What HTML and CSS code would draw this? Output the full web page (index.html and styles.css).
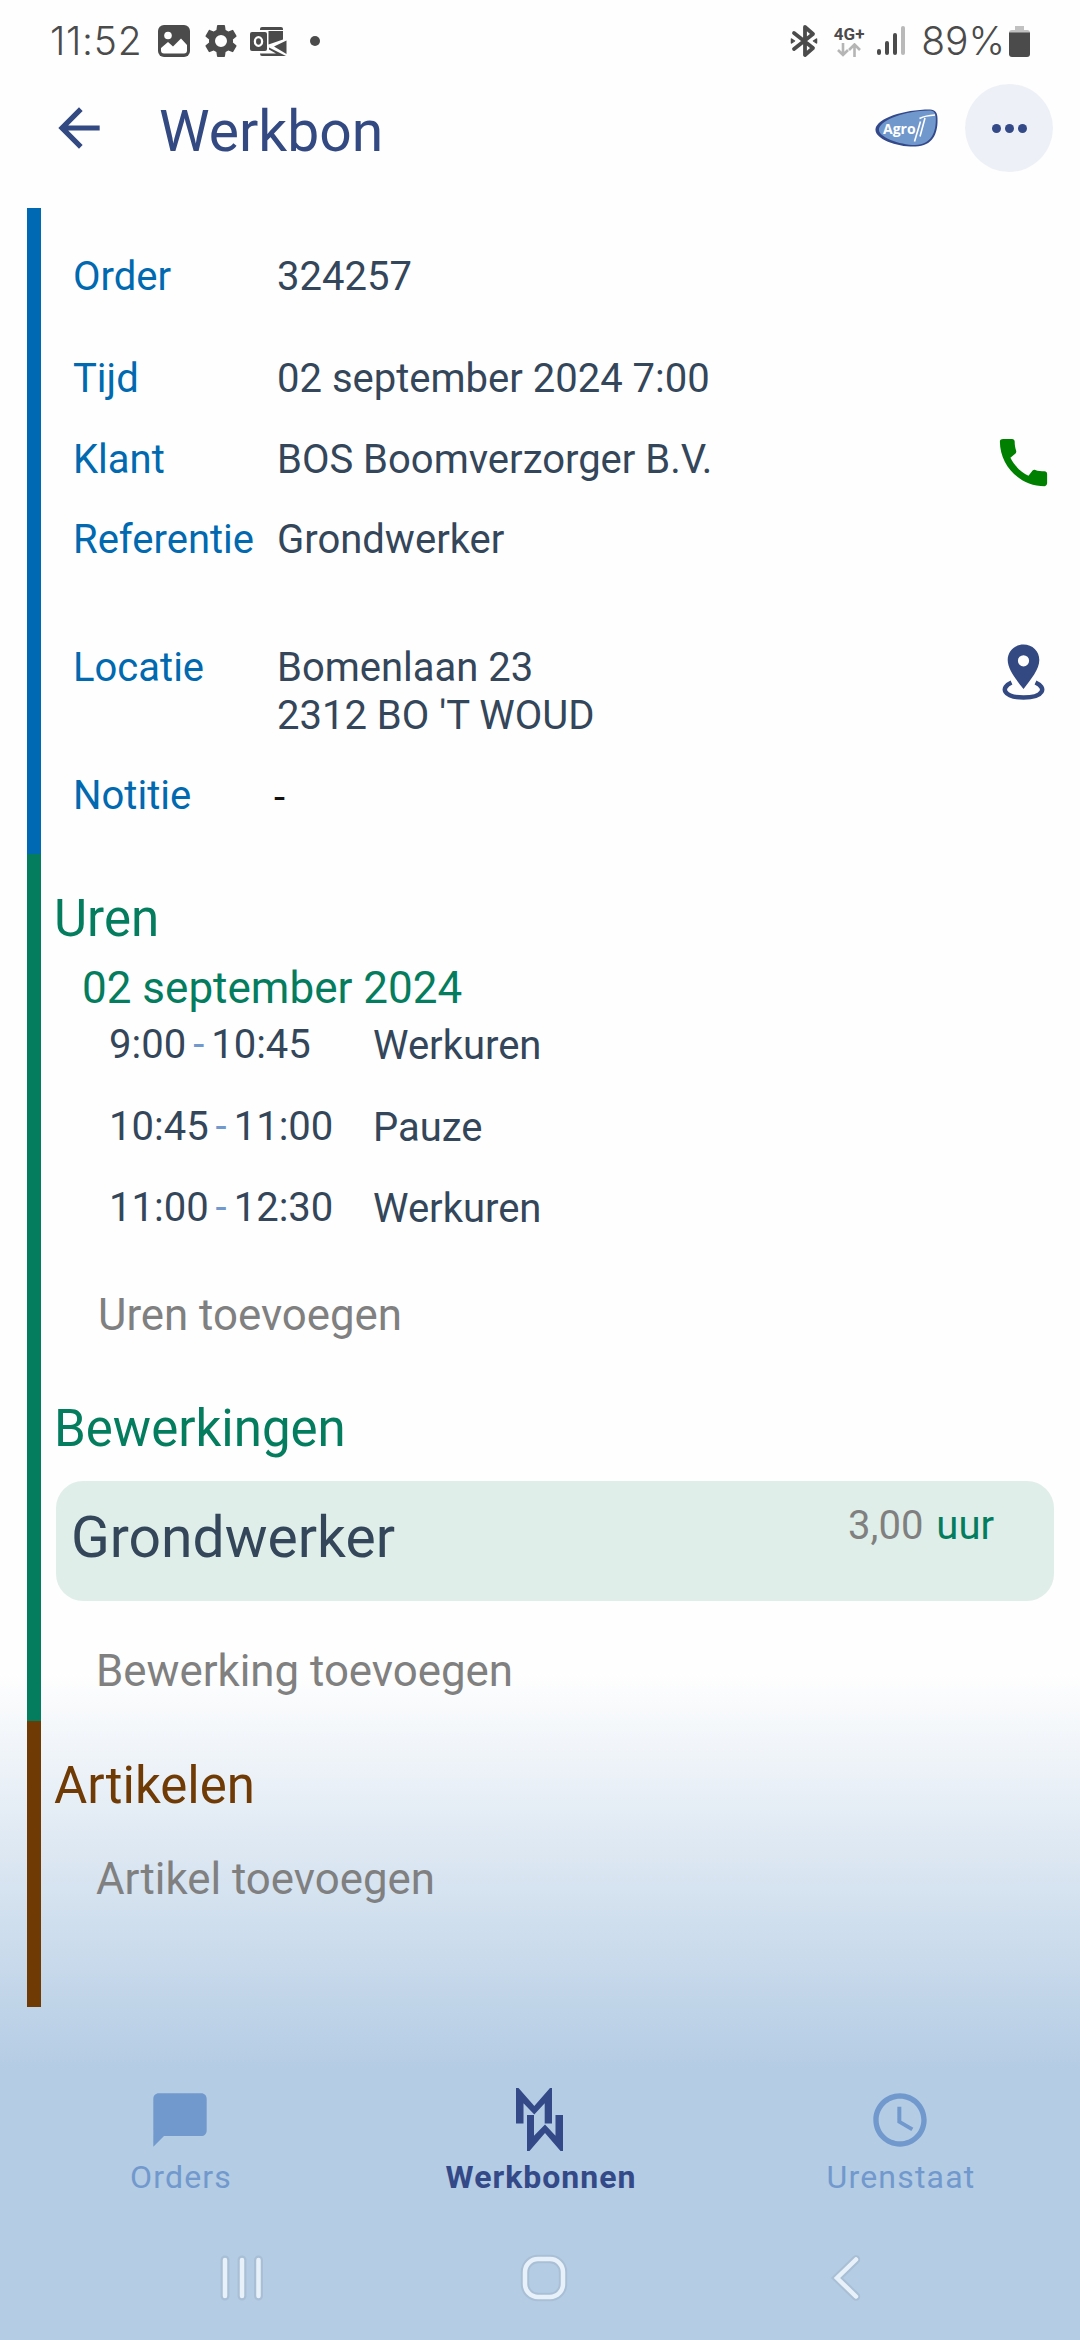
FILE: index.html
```html
<!DOCTYPE html>
<html lang="nl">
<head>
    <meta charset="UTF-8">
    <meta name="viewport" content="width=device-width, initial-scale=1.0">
    <title>Werkbon</title>
    <link rel="stylesheet" href="styles.css">
</head>
<body>

    <div class="status-bar">
        <div class="status-left">
            <span class="clock">11:52</span>
            <svg class="icon-photo" width="32" height="32" viewBox="0 0 32 32">
                <rect width="32" height="32" rx="6" fill="#4b4b4b"/>
                <circle cx="10" cy="10.500" r="3.800" fill="#fff"/>
                <path d="M3 23l7-6 5 4.500 8-8 6 6.500v5.500q0 3-3 3H6q-3 0-3-3z" fill="#fff"/>
            </svg>
            <svg class="icon-gear" width="40" height="40" viewBox="0 0 24 24">
                <path fill="#4b4b4b" d="M19.140 12.940c.04-.3.060-.61.060-.94 0-.32-.02-.64-.07-.94l2.030-1.580a.49.49 0 0 0 .12-.61l-1.920-3.320a.488.488 0 0 0-.59-.22l-2.390.96c-.5-.38-1.030-.7-1.620-.94l-.36-2.540a.484.484 0 0 0-.48-.41h-3.840c-.24 0-.43.17-.47.41l-.36 2.540c-.59.24-1.130.57-1.620.94l-2.390-.96c-.22-.08-.47 0-.59.22L2.740 8.870c-.12.21-.08.47.12.61l2.030 1.580c-.05.3-.09.63-.09.94s.02.64.07.94l-2.030 1.580a.49.49 0 0 0-.12.61l1.920 3.320c.12.22.37.29.59.22l2.390-.96c.5.38 1.030.7 1.620.94l.36 2.540c.05.24.24.41.48.41h3.840c.24 0 .44-.17.47-.41l.36-2.540c.59-.24 1.130-.56 1.620-.94l2.390.96c.22.080.47 0 .59-.22l1.920-3.320c.12-.22.07-.47-.12-.61l-2.010-1.580zM12 15.600A3.600 3.600 0 1 1 12 8.400a3.600 3.600 0 0 1 0 7.200z"/>
            </svg>
            <svg class="icon-mail" width="37" height="29" viewBox="0 0 37 29">
                <path d="M12 0h19q2 0 2 2v1H10V2q0-2 2-2z" fill="#4b4b4b"/>
                <path d="M18.500 4H33v8.500l-14.500 5z" fill="#4b4b4b"/>
                <path d="M36.500 13.500V27L24 19.500zM19 20.500l17 8.500H12q-2 0-2-2.500h16l-7-4z" fill="#4b4b4b"/>
                <rect y="5" width="17" height="19" rx="2" fill="#4b4b4b"/>
                <ellipse cx="8.500" cy="14.500" rx="3.600" ry="4.300" fill="none" stroke="#fff" stroke-width="2.300"/>
            </svg>
            <span class="more-dot"></span>
        </div>
        <div class="status-right">
            <svg width="28" height="34" viewBox="0 0 28 34" fill="none" stroke="#4b4b4b" stroke-width="3.800" stroke-linejoin="round" stroke-linecap="round">
                <path d="M4 9l19 15-8 7V3l8 7L4 25"/>
                <path d="M1.500 15v4l3-2zM26.500 15v4l-3-2z" fill="#4b4b4b" stroke-width="1.500"/>
            </svg>
            <div class="network">
                <span>4G+</span>
                <svg width="24" height="14" viewBox="0 0 24 14" fill="none" stroke="#b5b5b5" stroke-width="2.600">
                    <path d="M6 0v12M1 7l5 5 5-5M17.500 14V2M12 7l5.500-5.500L23 7"/>
                </svg>
            </div>
            <svg class="icon-signal" width="28" height="30" viewBox="0 0 28 30" stroke-width="4" stroke-linecap="round" stroke="#4b4b4b">
                <path d="M2 25v2M10 17v10M18 9v18"/>
                <path d="M26 2v25" stroke="#b9b9b9"/>
            </svg>
            <span class="battery-text">89%</span>
            <svg class="icon-battery" width="21" height="31" viewBox="0 0 21 31">
                <path d="M6 0h9v4h3q3 0 3 3H0q0-3 3-3h3z" fill="#c1c1c1"/>
                <path d="M0 6.500h21V28q0 3-3 3H3q-3 0-3-3z" fill="#4b4b4b"/>
            </svg>
        </div>
    </div>

    <div class="header">
        <svg class="back" width="62" height="62" viewBox="0 0 24 24">
            <path fill="#334982" d="M20 11H7.830l5.590-5.590L12 4l-8 8 8 8 1.410-1.410L7.830 13H20v-2z"/>
        </svg>
        <h1>Werkbon</h1>
        <svg class="logo" width="64" height="38" viewBox="0 0 64 38">
            <path d="M.5 20C2 9.500 28 .5 55 .5c5.500 0 7.500 3.500 7.500 9 .5 14-4 27.500-22 28C22 38-.5 30 .5 20z" fill="#33498a"/>
            <path d="M4 19.500C7.500 10 30 2 54 1.500c5 0 6.800 2.500 6.800 8C61 22.500 57 35.500 40 36 25 36 2 28 4 19.500z" fill="#7098cc"/>
            <text x="8" y="24.500" class="logo-text">Agro</text>
            <path d="M45.500 12.500l-6 20M50 9l-5 18.500M44.500 9.500q6-3 15.500-3.500" fill="none" stroke="#fff" stroke-width="1.600"/>
        </svg>
        <button class="menu-button" title="Menu">
            <span></span><span></span><span></span>
        </button>
    </div>

    <div class="section order">
        <div class="row">
            <div class="label">Order</div>
            <div class="value">324257</div>
        </div>
        <div class="row time">
            <div class="label">Tijd</div>
            <div class="value">02 september 2024 7:00</div>
        </div>
        <div class="row customer">
            <div class="label">Klant</div>
            <div class="value">BOS Boomverzorger B.V.</div>
            <svg class="phone" width="63" height="63" viewBox="0 0 24 24">
                <path fill="#008000" d="M20.010 15.380c-1.230 0-2.420-.2-3.530-.56-.35-.12-.74-.03-1.010.24l-1.570 1.970c-2.830-1.350-5.480-3.900-6.890-6.830l1.950-1.660c.27-.28.35-.67.24-1.020-.37-1.110-.56-2.300-.56-3.530 0-.54-.45-.99-.99-.99H4.190C3.650 3 3 3.240 3 3.990 3 13.280 10.730 21 20.010 21c.71 0 .99-.63.99-1.180v-3.450c0-.54-.45-.99-.99-.99z"/>
            </svg>
        </div>
        <div class="row reference">
            <div class="label">Referentie</div>
            <div class="value">Grondwerker</div>
        </div>
        <div class="row location">
            <div class="label">Locatie</div>
            <div class="value">Bomenlaan 23<br>2312 BO 'T WOUD</div>
            <svg class="pin" width="43" height="57" viewBox="0 0 43 57">
                <path fill="#334982" fill-rule="evenodd" d="M21.500.5C12.500.5 5.700 7 5.700 16c0 9 8 19 15.800 29 7.800-10 15.800-20 15.800-29C37.300 7 30.500.5 21.500.5zm0 10.700a5.600 5.600 0 1 1 0 11.200 5.600 5.600 0 0 1 0-11.200z"/>
                <path fill="none" stroke="#334982" stroke-width="4.500" d="M9.500 38.500C-2 43.500 1 53.500 21.500 53.500S45 43.500 33.500 38.500"/>
            </svg>
        </div>
        <div class="row note">
            <div class="label">Notitie</div>
            <div class="value empty">-</div>
        </div>
    </div>

    <div class="section work">
        <h2>Uren</h2>
        <h3>02 september 2024</h3>
        <div class="hours">
            <div class="hour">
                <div class="period">9:00<span>-</span>10:45</div>
                <div class="kind">Werkuren</div>
            </div>
            <div class="hour">
                <div class="period">10:45<span>-</span>11:00</div>
                <div class="kind">Pauze</div>
            </div>
            <div class="hour">
                <div class="period">11:00<span>-</span>12:30</div>
                <div class="kind">Werkuren</div>
            </div>
        </div>
        <div class="add add-hours">Uren toevoegen</div>

        <h2 class="operations">Bewerkingen</h2>
        <div class="card">
            <div class="card-name">Grondwerker</div>
            <div class="card-amount">3,00 <span>uur</span></div>
        </div>
        <div class="add add-operation">Bewerking toevoegen</div>
    </div>

    <div class="section articles">
        <h2>Artikelen</h2>
        <div class="add add-article">Artikel toevoegen</div>
    </div>

    <div class="tabs">
        <div class="tab">
            <svg width="64" height="64" viewBox="0 0 24 24">
                <path fill="#7199cd" d="M20 2H4c-1.100 0-2 .9-2 2v18l4-4h14c1.100 0 2-.9 2-2V4c0-1.100-.9-2-2-2z"/>
            </svg>
            <span>Orders</span>
        </div>
        <div class="tab active">
            <svg width="64" height="64" viewBox="-8 0 64 64" fill="#334988">
                <path d="M0 0h2.500l15.800 18L34 0h2v35.500h-7.300V15.300L18.300 26.500 7.500 15.300v20.200H0z"/>
                <path d="M11 27h7v20.700L29 36.500l10.500 11.200V27H47v36h-2.500L29 45 13.500 63H11z"/>
            </svg>
            <span>Werkbonnen</span>
        </div>
        <div class="tab">
            <svg width="64" height="64" viewBox="0 0 24 24">
                <path fill="#7199cd" d="M11.990 2C6.470 2 2 6.480 2 12s4.470 10 9.990 10C17.520 22 22 17.520 22 12S17.520 2 11.990 2zM12 20c-4.420 0-8-3.580-8-8s3.580-8 8-8 8 3.580 8 8-3.580 8-8 8zm.5-13H11v6l5.250 3.150.75-1.230-4.500-2.670z"/>
            </svg>
            <span>Urenstaat</span>
        </div>
    </div>

    <div class="system-nav">
        <svg width="50" height="50" viewBox="0 0 50 50" fill="none" stroke-linecap="round">
            <path d="M8 7v36M25 7v36M41.500 7v36" stroke="#a9bfd5" stroke-width="9"/>
            <path d="M8 7v36M25 7v36M41.500 7v36" stroke="#e8f1f9" stroke-width="4.500"/>
        </svg>
        <svg width="50" height="50" viewBox="0 0 50 50" fill="none">
            <rect x="6" y="6" width="38" height="38" rx="13" stroke="#a9bfd5" stroke-width="8.500"/>
            <rect x="6" y="6" width="38" height="38" rx="13" stroke="#e8f1f9" stroke-width="4.500"/>
        </svg>
        <svg width="50" height="50" viewBox="0 0 50 50" fill="none" stroke-linecap="round">
            <path d="M35 6.500L16 25l19 18.500" stroke="#a9bfd5" stroke-width="8.500"/>
            <path d="M35 6.500L16 25l19 18.500" stroke="#e8f1f9" stroke-width="4.500"/>
        </svg>
    </div>

</body>
</html>
```

FILE: styles.css
```css
* {
    box-sizing: border-box;
}

body {
    margin: 0;
    width: 1080px;
    height: 2340px;
    overflow: hidden;
    font-family: Roboto, sans-serif;
    font-size: 40px;
    line-height: 48px;
    color: #34465a;
    background: linear-gradient(#fefefe 1675px, #b4cce4 2070px);
}

h1, h2, h3 {
    margin: 0;
    font-weight: 400;
}

/* Android status bar */
.status-bar {
    display: flex;
    justify-content: space-between;
    height: 82px;
    padding: 0 50px 0 50px;
    font-family: Inter, sans-serif;
    font-size: 39px;
    font-weight: 300;
    color: #4b4b4b;
}

.status-left, .status-right {
    display: flex;
    align-items: center;
}

.clock {
    width: 108px;
    letter-spacing: .7px;
}

.icon-gear {
    margin-left: 11px;
}

.icon-mail {
    margin-left: 9px;
}

.more-dot {
    width: 10px;
    height: 10px;
    margin-left: 23px;
    border-radius: 50%;
    background: #4b4b4b;
}

.network {
    display: flex;
    flex-direction: column;
    align-items: center;
    width: 32px;
    margin: 0 12px 0 15px;
    font-family: Roboto, sans-serif;
    font-size: 17px;
    font-weight: 700;
    line-height: 17px;
}

.icon-signal {
    margin-right: 16px;
}

.icon-battery {
    margin-left: 4px;
}

/* Title bar */
.header {
    display: flex;
    align-items: center;
    height: 126px;
    padding: 0 27px 34px 48px;
}

.header h1 {
    margin-left: 49px;
    padding-top: 7px;
    font-size: 57px;
    line-height: 66px;
    color: #334982;
}

.logo {
    margin-left: auto;
}

.logo-text {
    font-family: "Open Sans", sans-serif;
    font-size: 14px;
    font-weight: 700;
    fill: #fff;
}

.menu-button {
    display: flex;
    align-items: center;
    justify-content: center;
    gap: 4px;
    width: 88px;
    height: 88px;
    margin-left: 26px;
    padding: 0;
    border: none;
    border-radius: 50%;
    background: #edf1f7;
}

.menu-button span {
    width: 9px;
    height: 9px;
    border-radius: 50%;
    background: #334988;
}

/* Sections with the coloured line */
.section {
    margin-left: 27px;
    border-left: 14px solid;
}

.order {
    height: 646px;
    padding: 45px 25px 0 32px;
    border-color: #0069b4;
}

.row {
    display: flex;
    align-items: flex-start;
}

.label {
    width: 204px;
    color: #0069b0;
}

.time {
    margin-top: 54px;
}

.customer {
    margin-top: 33px;
}

.reference {
    margin-top: 32px;
}

.location {
    margin-top: 80px;
}

.note {
    margin-top: 32px;
}

.phone {
    margin: -5px 0 -10px auto;
}

.pin {
    margin: 0 10px 0 auto;
}

.empty {
    margin-left: -3px;
    padding-top: 2px;
    color: #111;
}

.work {
    height: 867px;
    padding-top: 35px;
    border-color: #047d5e;
}

h2 {
    padding-left: 13px;
    font-size: 51px;
    line-height: 60px;
}

.work h2, .work h3 {
    color: #047d5e;
}

h3 {
    margin-top: 13px;
    padding-left: 41px;
    font-size: 44px;
    line-height: 52px;
}

.hours {
    display: flex;
    flex-direction: column;
    gap: 33.500px;
    padding: 7px 0 0 68px;
}

.hour {
    display: flex;
    height: 48px;
}

.period {
    width: 264px;
}

.period span {
    margin: 0 7px;
    color: #7199cd;
}

.kind {
    padding-top: 1px;
}

.add {
    font-size: 43.800px;
    line-height: 52px;
    color: #808080;
}

.add-hours {
    margin-top: 57px;
    padding-left: 57px;
}

.operations {
    margin-top: 58px;
}

.card {
    display: flex;
    justify-content: space-between;
    height: 120px;
    margin: 22px 26px 0 15px;
    padding: 21px 60px 0 15px;
    border-radius: 27px;
    background: #e0eee9;
}

.card-name {
    padding-top: 3px;
    font-size: 57px;
    line-height: 66px;
}

.card-amount {
    color: #808080;
}

.card-amount span {
    margin-left: 3px;
    color: #047d5e;
}

.add-operation {
    margin-top: 44px;
    padding-left: 55px;
}

.articles {
    height: 286px;
    padding-top: 35px;
    border-color: #703a05;
}

.articles h2 {
    color: #703a05;
}

.add-article {
    margin-top: 37px;
    padding-left: 55px;
}

/* Bottom tabs */
.tabs {
    display: grid;
    grid-template-columns: repeat(3, 1fr);
    height: 171px;
    margin-top: 53px;
    padding-top: 28px;
}

.tab {
    display: flex;
    flex-direction: column;
    align-items: center;
    font-size: 32px;
    line-height: 38px;
    letter-spacing: 1.200px;
    color: #7199cd;
}

.tab span {
    margin-top: 6px;
    padding-left: 2px;
}

.tab.active {
    font-weight: 700;
    letter-spacing: 1px;
    color: #334988;
}

.system-nav {
    display: grid;
    grid-template-columns: repeat(3, 302px);
    justify-items: center;
    padding: 22px 83px 0 91px;
}
```
